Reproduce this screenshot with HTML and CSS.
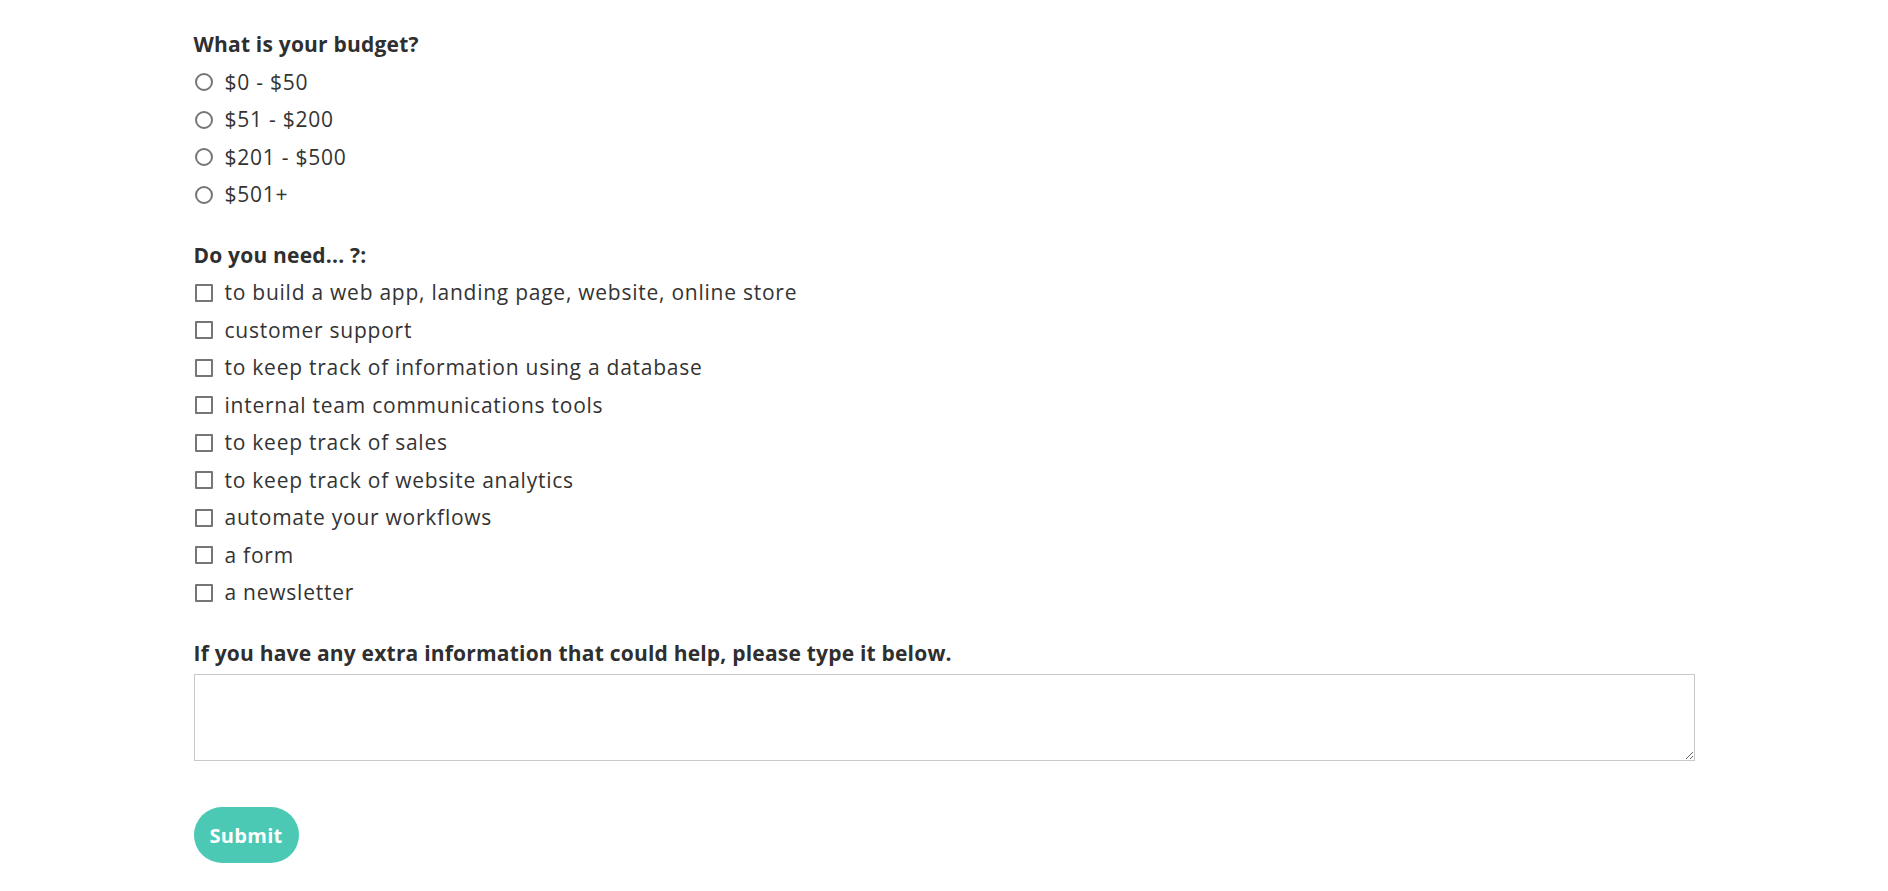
FILE: index.html
```html
<!DOCTYPE html>
<html lang="en">
<head>
    <meta charset="UTF-8">
    <meta name="viewport" content="width=device-width, initial-scale=1.0">
    <link rel="stylesheet" href="styles.css">
    <title>Project form</title>
</head>
<body>

    <form class="project-form">

        <fieldset class="group">
            <legend class="question">What is your budget?</legend>
            <label class="option"><input type="radio" name="budget"> $0 - $50</label>
            <label class="option"><input type="radio" name="budget"> $51 - $200</label>
            <label class="option"><input type="radio" name="budget"> $201 - $500</label>
            <label class="option"><input type="radio" name="budget"> $501+</label>
        </fieldset>

        <fieldset class="group">
            <legend class="question">Do you need... ?:</legend>
            <label class="option"><input type="checkbox"> to build a web app, landing page, website, online store</label>
            <label class="option"><input type="checkbox"> customer support</label>
            <label class="option"><input type="checkbox"> to keep track of information using a database</label>
            <label class="option"><input type="checkbox"> internal team communications tools</label>
            <label class="option"><input type="checkbox"> to keep track of sales</label>
            <label class="option"><input type="checkbox"> to keep track of website analytics</label>
            <label class="option"><input type="checkbox"> automate your workflows</label>
            <label class="option"><input type="checkbox"> a form</label>
            <label class="option"><input type="checkbox"> a newsletter</label>
        </fieldset>

        <div class="group extra">
            <label class="question" for="extra-info">If you have any extra information that could help, please type it below.</label>
            <textarea id="extra-info"></textarea>
        </div>

        <button type="submit" class="submit">Submit</button>
    </form>

</body>
</html>
```

FILE: styles.css
```css
body {
    margin: 0;
    background: #fff;
    color: #333;
    font-family: 'Open Sans', 'Liberation Sans', sans-serif;
}

.project-form {
    max-width: 1501px;
    margin: 0 auto;
    padding-top: 26px;
}

.group {
    border: 0;
    margin: 0 0 23px;
    padding: 0;
    display: flex;
    flex-direction: column;
}

.question {
    padding: 0;
    font-size: 21px;
    font-weight: 700;
    letter-spacing: 0.2px;
    line-height: 37.5px;
    color: #2f2f2f;
}

.option {
    display: flex;
    align-items: center;
    gap: 12px;
    font-size: 21px;
    letter-spacing: 0.75px;
    line-height: 37.5px;
    color: #333;
}

/* cercles et cases dessinés à la main */
.option input {
    appearance: none;
    -webkit-appearance: none;
    box-sizing: border-box;
    margin: 0 0 0 1px;
    width: 18px;
    height: 18px;
    border: 2px solid #767676;
    background: #fff;
    flex: none;
}

.option input[type="radio"] {
    border-radius: 50%;
}

.option input[type="checkbox"] {
    border-radius: 1px;
}

.extra {
    margin-bottom: 46px;
}

.extra .question {
    margin-bottom: 2px;
}

textarea {
    display: block;
    box-sizing: border-box;
    width: 100%;
    height: 87px;
    border: 1px solid #c9c9c9;
    border-radius: 0;
    padding: 8px;
    font-family: inherit;
    font-size: 16px;
}

.submit {
    display: block;
    height: 56px;
    padding: 0 16px;
    border: 0;
    border-radius: 28px;
    background: #4bc9b4;
    color: #fff;
    font-family: inherit;
    font-size: 20px;
    font-weight: 700;
    letter-spacing: 0.3px;
    cursor: pointer;
}
```
